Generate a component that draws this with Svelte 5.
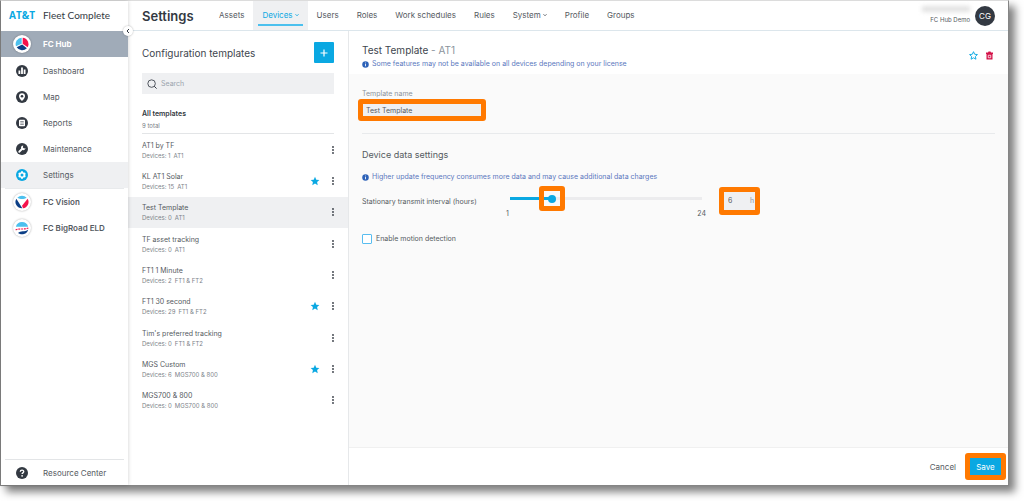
<script>
  const modules = [
    { label: 'Dashboard', icon: 'dashboard' },
    { label: 'Map', icon: 'map' },
    { label: 'Reports', icon: 'reports' },
    { label: 'Maintenance', icon: 'wrench' },
    { label: 'Settings', icon: 'gear', active: true }
  ];

  const tabs = [
    { label: 'Assets' },
    { label: 'Devices', menu: true, active: true },
    { label: 'Users' },
    { label: 'Roles' },
    { label: 'Work schedules' },
    { label: 'Rules' },
    { label: 'System', menu: true },
    { label: 'Profile' },
    { label: 'Groups' }
  ];

  const templates = [
    { name: 'AT1 by TF', devices: 1, type: 'AT1' },
    { name: 'KL AT1 Solar', devices: 15, type: 'AT1', starred: true },
    { name: 'Test Template', devices: 0, type: 'AT1', selected: true },
    { name: 'TF asset tracking', devices: 0, type: 'AT1' },
    { name: 'FT1 1 Minute', devices: 2, type: 'FT1 & FT2' },
    { name: 'FT1 30 second', devices: 29, type: 'FT1 & FT2', starred: true },
    { name: "Tim's preferred tracking", devices: 0, type: 'FT1 & FT2' },
    { name: 'MGS Custom', devices: 6, type: 'MGS700 & 800', starred: true },
    { name: 'MGS700 & 800', devices: 0, type: 'MGS700 & 800' }
  ];

  const min = 1;
  const max = 24;
  let hours = $state(6);
  let name = $state('Test Template');
  let motion = $state(false);
  let fraction = $derived((hours - min) / (max - min));
</script>

{#snippet starShape()}
  <path d="M12 1.8l3.1 6.9 7.4.8-5.5 5 1.5 7.4L12 18.200l-6.500 3.700L7 14.500l-5.500-5 7.400-.8z" />
{/snippet}

{#snippet info()}
  <svg class="info" viewBox="0 0 14 14" aria-hidden="true">
    <circle cx="7" cy="7" r="6.500" fill="#2d62b8" />
    <path d="M7 6v4.500M7 3.200v1.600" stroke="#fff" stroke-width="1.700" />
  </svg>
{/snippet}

{#snippet caret()}
  <svg class="caret" viewBox="0 0 8 8" aria-hidden="true">
    <path d="M1 2.500L4 5.500l3-3" fill="none" stroke="currentColor" stroke-width="1.800" />
  </svg>
{/snippet}

{#snippet icon(kind)}
  <svg class="glyph" viewBox="0 0 24 24" aria-hidden="true">
    <circle cx="12" cy="12" r="12" fill={kind === 'gear' ? '#0aa8e2' : '#333942'} />
    {#if kind === 'dashboard'}
      <path d="M5 11h3.600v7H5zM10.200 5h3.600v13h-3.600zM15.400 9H19v9h-3.600z" fill="#fff" />
    {:else if kind === 'map'}
      <path d="M12 4.500a6 6 0 0 0-6 6c0 4 6 9.500 6 9.500s6-5.500 6-9.500a6 6 0 0 0-6-6z" fill="#fff" />
      <circle cx="12" cy="10.500" r="2.600" fill="#333942" />
    {:else if kind === 'reports'}
      <rect x="6" y="5.500" width="12" height="13" rx="1.500" fill="#fff" />
      <path d="M8.500 9h7M8.500 12h7M8.500 15h7" stroke="#6b7078" stroke-width="1.500" />
    {:else if kind === 'wrench'}
      <path d="M6.500 17.500l6-6" stroke="#fff" stroke-width="3.600" stroke-linecap="round" />
      <path d="M14.500 5.200a4.600 4.600 0 1 0 4.600 5l-2.800.9-2.600-2.200z" fill="#fff" />
    {:else if kind === 'gear'}
      <path d="M10.300 4.500h3.400l.6 2 1.600.9 2-.5 1.700 2.900-1.400 1.500v1.400l1.400 1.500-1.700 2.900-2-.5-1.600.9-.6 2h-3.400l-.6-2-1.600-.9-2 .5-1.700-2.900 1.400-1.500v-1.400L4.400 9.800l1.700-2.900 2 .5 1.600-.9z" fill="#fff" />
      <circle cx="12" cy="12" r="3" fill="#0aa8e2" />
    {:else}
      <path d="M8.600 9.600c0-4.400 6.900-4.400 6.900-.4 0 2.600-3.300 2.500-3.300 5" fill="none" stroke="#fff" stroke-width="2.600" />
      <circle cx="12.200" cy="17.600" r="1.700" fill="#fff" />
    {/if}
  </svg>
{/snippet}

<div class="page">
  <div class="window">
    <aside class="sidebar">
      <div class="brand"><strong>AT&amp;T</strong><span>Fleet Complete</span></div>
      <button class="collapse" aria-label="Collapse menu">
        <svg viewBox="0 0 8 8" aria-hidden="true"><path d="M5 2L3 4l2 2" fill="none" stroke="#333942" /></svg>
      </button>
      <nav class="modules">
        <a class="module hub" href="#hub">
          <span class="badge">
            <svg viewBox="0 0 24 24" aria-hidden="true">
              <path d="M11.500 2.500v9L3 15.500A9.800 9.800 0 0 1 11.500 2.500z" fill="#4cc0ee" />
              <path d="M13 2.500a9.800 9.800 0 0 1 7.500 14.500L13 11.500z" fill="#f5114b" />
              <path d="M4 17l8.300-4.200 7 5.500A9.800 9.800 0 0 1 4 17z" fill="#0c3f86" />
            </svg>
          </span>
          FC Hub
        </a>
        {#each modules as m}
          <a class="module" class:active={m.active} href="#{m.icon}">
            <span class="slot">{@render icon(m.icon)}</span>{m.label}
          </a>
        {/each}
        <hr />
        <a class="module product" href="#vision">
          <span class="badge">
            <svg viewBox="0 0 24 24" aria-hidden="true">
              <path d="M5 5.500a9.700 9.700 0 0 1 14 0c-4 2.500-10 2.500-14 0z" fill="#4cc0ee" />
              <path d="M3.500 7l9 14.500A9.700 9.700 0 0 1 3.500 7z" fill="#0c3f86" />
              <path d="M20.500 7a9.700 9.700 0 0 1-7 14.500l-1.500-4z" fill="#f5114b" />
            </svg>
          </span>
          FC Vision
        </a>
        <a class="module product" href="#bigroad">
          <span class="badge">
            <svg viewBox="0 0 24 24" aria-hidden="true">
              <path d="M2.800 10A9.600 9.600 0 0 1 21.200 10z" fill="#4cc0ee" />
              <path d="M2.500 15c5-3 12 0 19-3" fill="none" stroke="#f5114b" stroke-width="1.800" stroke-dasharray="3 1.200" />
              <path d="M6 19.500c4-4 10-1.500 15.300-5A9.700 9.700 0 0 1 6 19.500z" fill="#0c3f86" />
            </svg>
          </span>
          FC BigRoad ELD
        </a>
      </nav>
      <div class="resources">
        <a class="module" href="#help"><span class="slot">{@render icon('help')}</span>Resource Center</a>
      </div>
    </aside>

    <div class="main">
      <header class="topbar">
        <h1>Settings</h1>
        <nav class="tabs">
          {#each tabs as t}
            <a class="tab" class:current={t.active} href="#{t.label}">
              <span>{t.label}{#if t.menu}{@render caret()}{/if}</span>
            </a>
          {/each}
        </nav>
        <div class="account">
          <div class="who">
            <i class="redacted"></i>
            <span>FC Hub Demo</span>
          </div>
          <span class="avatar">CG</span>
        </div>
      </header>

      <div class="columns">
        <section class="list">
          <div class="list-head">
            <h2>Configuration templates</h2>
            <button class="add" aria-label="Add template">
              <svg viewBox="0 0 10 10" aria-hidden="true"><path d="M5 1.500v7M1.500 5h7" stroke="#fff" stroke-width="1.200" /></svg>
            </button>
          </div>
          <label class="search">
            <svg viewBox="0 0 12 12" aria-hidden="true">
              <circle cx="5.500" cy="5.500" r="4.500" fill="none" stroke="#333942" />
              <path d="M8.700 8.700L11.500 11.500" stroke="#333942" stroke-width="1.200" />
            </svg>
            <input type="search" placeholder="Search" aria-label="Search" />
          </label>
          <div class="summary">
            <strong>All templates</strong>
            <span>9 total</span>
          </div>
          <ul class="templates">
            {#each templates as t}
              <li class:selected={t.selected}>
                <div class="text">
                  <span class="name">{t.name}</span>
                  <span class="meta"><span>Devices: {t.devices}</span><span>{t.type}</span></span>
                </div>
                {#if t.starred}
                  <svg class="star" viewBox="0 0 24 24" fill="#0aa8e2" aria-hidden="true">{@render starShape()}</svg>
                {/if}
                <button class="more" aria-label="More actions">
                  <svg viewBox="0 0 4 10" fill="#333942" aria-hidden="true">
                    <circle cx="2" cy="2" r="0.900" /><circle cx="2" cy="5" r="0.900" /><circle cx="2" cy="8" r="0.900" />
                  </svg>
                </button>
              </li>
            {/each}
          </ul>
        </section>

        <section class="detail">
          <div class="detail-head">
            <div>
              <h2>Test Template <span>- AT1</span></h2>
              <p class="note">{@render info()}Some features may not be available on all devices depending on your license</p>
            </div>
            <div class="actions">
              <button aria-label="Favourite">
                <svg viewBox="0 0 24 24" fill="none" stroke="#0aa8e2" stroke-width="2.500" aria-hidden="true">{@render starShape()}</svg>
              </button>
              <button aria-label="Delete">
                <svg viewBox="0 0 18 18" aria-hidden="true">
                  <path d="M2 3h4l1-2h4l1 2h4v3H2zM3 6h12v11H3z" fill="#d4144a" />
                  <path d="M6.500 8.500h5v5h-5z" fill="none" stroke="#fff" stroke-width="1.500" />
                </svg>
              </button>
            </div>
          </div>

          <form class="body" onsubmit={(e) => e.preventDefault()}>
            <label class="field-label" for="template-name">Template name</label>
            <div class="callout name-callout">
              <input id="template-name" type="text" bind:value={name} />
            </div>
            <hr />
            <h3>Device data settings</h3>
            <p class="note">{@render info()}Higher update frequency consumes more data and may cause additional data charges</p>
            <div class="interval">
              <label for="interval">Stationary transmit interval (hours)</label>
              <div class="slider" style="--f: {fraction}">
                <input id="interval" type="range" {min} {max} bind:value={hours} />
                <i class="callout thumb-callout"></i>
                <div class="scale"><span>{min}</span><span>{max}</span></div>
              </div>
              <div class="callout hours-callout">
                <input type="text" aria-label="Hours" bind:value={hours} /><span>h</span>
              </div>
            </div>
            <label class="check"><input type="checkbox" bind:checked={motion} />Enable motion detection</label>
          </form>

          <footer>
            <button class="cancel">Cancel</button>
            <div class="callout"><button class="save">Save</button></div>
          </footer>
        </section>
      </div>
    </div>
  </div>
</div>

<style>
  :global(body) {
    background: #fff;
  }

  .page,
  .page :global(*) {
    box-sizing: border-box;
  }

  .page {
    display: flex;
    height: 100vh;
    padding: 0 15px 15px 0;
    font: 7px/10px Inter, 'Liberation Sans', sans-serif;
    color: #555a61;
  }

  h1, h2, h3, p, ul {
    margin: 0;
    padding: 0;
    font-weight: 400;
  }

  button, input {
    margin: 0;
    padding: 0;
    border: 0;
    background: none;
    font: inherit;
    color: inherit;
    outline: 0;
  }

  a {
    color: inherit;
    text-decoration: none;
  }

  hr {
    margin: 0;
    border: 0;
    border-top: 1px solid #e8eaec;
  }

  svg {
    display: block;
    flex: none;
  }

  .window {
    display: flex;
    flex: 1;
    min-width: 0;
    border: 1px solid #858585;
    border-top-color: #dcdcdc;
    background: #fff;
    box-shadow: 6px 6px 8px rgba(0, 0, 0, 0.5);
  }

  .sidebar {
    position: relative;
    z-index: 2;
    display: flex;
    flex-direction: column;
    width: 127px;
    flex: none;
    box-shadow: 0 0 4px rgba(0, 0, 0, 0.2);
    background: #fff;
  }

  .brand {
    display: flex;
    align-items: center;
    gap: 8px;
    height: 30px;
    padding: 0 0 2px 8px;
    font: 10px/14px Lato, sans-serif;
    color: #333942;
    white-space: nowrap;
  }

  .brand strong {
    font-family: 'Open Sans', sans-serif;
    color: #0aa8e2;
    font-weight: 700;
  }

  .collapse {
    position: absolute;
    top: 25px;
    right: -5px;
    width: 10px;
    height: 10px;
    padding: 1px;
    border-radius: 50%;
    background: #fff;
    box-shadow: 0 0 2px rgba(0, 0, 0, 0.3);
  }

  .modules hr {
    margin: 0 4px;
  }

  .module {
    display: flex;
    align-items: center;
    gap: 12px;
    height: 26px;
    padding-left: 12px;
    font-size: 8px;
    white-space: nowrap;
  }

  .module.hub {
    background: #a0abb8;
    color: #fff;
    font-weight: 700;
  }

  .module.hub + .module {
    margin-top: 1px;
  }

  .module.active {
    background: #eff0f2;
  }

  .module.product {
    font-weight: 600;
  }

  .badge, .slot {
    display: grid;
    place-items: center;
    width: 18px;
    height: 18px;
  }

  .badge {
    border-radius: 50%;
    background: #fff;
    box-shadow: 0 0 2px rgba(0, 0, 0, 0.35);
  }

  .badge svg {
    width: 16px;
    height: 16px;
  }

  .glyph {
    width: 12px;
    height: 12px;
  }

  .resources {
    margin: auto 4px 0;
    border-top: 1px solid #e3e5e7;
  }

  .resources .module {
    height: 25px;
    padding-left: 8px;
  }

  .main {
    display: flex;
    flex: 1;
    flex-direction: column;
    min-width: 0;
  }

  .topbar {
    display: flex;
    height: 30px;
    align-items: center;
    padding: 0 13px 0 14px;
    border-bottom: 1px solid #dce6ec;
    white-space: nowrap;
  }

  h1 {
    width: 68px;
    font-size: 13px;
    line-height: 18px;
    font-weight: 600;
    color: #333942;
  }

  .tabs {
    display: flex;
    align-self: stretch;
  }

  .tab {
    display: flex;
    padding: 0 5px;
    font-size: 8px;
  }

  .tab span {
    display: flex;
    align-items: center;
    gap: 2px;
    margin-bottom: 4px;
    padding: 4px 4px 0;
    border-bottom: 2px solid transparent;
  }

  .tab.current {
    background: #eff0f2;
    color: #0aa8e2;
  }

  .tab.current span {
    border-color: #4cc0ee;
  }

  .caret {
    width: 4px;
    height: 4px;
  }

  .account {
    display: flex;
    align-items: center;
    gap: 5px;
    margin-left: auto;
  }

  .who {
    display: flex;
    flex-direction: column;
    align-items: flex-end;
    gap: 3px;
    font-size: 6px;
  }

  .redacted {
    width: 48px;
    height: 6px;
    background: #e2e2e2;
    filter: blur(2px);
  }

  .avatar {
    width: 20px;
    height: 20px;
    border-radius: 50%;
    background: #333942;
    color: #fff;
    font-size: 8px;
    line-height: 20px;
    text-align: center;
  }

  .columns {
    display: flex;
    flex: 1;
    min-height: 0;
  }

  .list {
    width: 221px;
    flex: none;
    border-right: 1px solid #e6e8ea;
  }

  .list-head {
    display: flex;
    align-items: center;
    justify-content: space-between;
    padding: 11px 14px 10px;
  }

  h2 {
    font-size: 10px;
    line-height: 14px;
    color: #40464e;
  }

  .add {
    display: grid;
    place-items: center;
    width: 20px;
    height: 21px;
    border-radius: 1px;
    background: #0aa8e2;
  }

  .add svg {
    width: 10px;
    height: 10px;
  }

  .search {
    display: flex;
    align-items: center;
    gap: 4px;
    height: 21px;
    margin: 0 14px;
    padding: 0 5px;
    background: #eff0f2;
  }

  .search svg {
    width: 10px;
    height: 10px;
  }

  .search input {
    flex: 1;
    min-width: 0;
  }

  .search input::placeholder {
    color: #9aa3ad;
    opacity: 1;
  }

  .summary {
    display: flex;
    flex-direction: column;
    gap: 2px;
    margin: 0 14px;
    padding: 15px 0 2px;
    border-bottom: 1px solid #e3e5e7;
  }

  .summary strong {
    font-weight: 600;
    color: #333942;
  }

  .summary span {
    font-size: 6px;
    color: #777d85;
  }

  .templates {
    display: grid;
    grid-auto-rows: 1fr;
    min-height: 282px;
    list-style: none;
  }

  .templates li {
    display: flex;
    align-items: center;
    gap: 11px;
    padding: 0 13px 0 14px;
  }

  .selected {
    background: #eff0f2;
  }

  .text {
    display: flex;
    flex: 1;
    flex-direction: column;
    padding-top: 2px;
  }

  .meta {
    display: flex;
    gap: 3px;
    font-size: 6px;
    color: #7d838a;
  }

  .star {
    width: 10px;
    height: 10px;
  }

  .more svg {
    width: 4px;
    height: 10px;
  }

  .detail {
    display: flex;
    flex: 1;
    flex-direction: column;
    min-width: 0;
    background: #fafafa;
  }

  .detail-head {
    display: flex;
    justify-content: space-between;
    min-height: 43px;
    padding: 12px 14px 0 13px;
    background: #fff;
  }

  .detail-head h2 {
    margin-bottom: 2px;
  }

  .detail-head h2 span {
    color: #8b939c;
  }

  .note {
    display: flex;
    align-items: center;
    gap: 3px;
    color: #5a78be;
  }

  .info {
    width: 7px;
    height: 7px;
  }

  .actions {
    display: flex;
    align-items: center;
    gap: 7px;
    height: 24px;
  }

  .actions svg {
    width: 9px;
    height: 9px;
  }

  .body {
    flex: 1;
    padding: 15px 13px 0;
  }

  .field-label {
    display: block;
    color: #8b939c;
  }

  .callout {
    border: 5px solid #ff7900;
    border-radius: 3px;
    background: #eff0f2;
  }

  .name-callout {
    width: 128px;
    margin: 0 0 12px -4px;
  }

  .name-callout input {
    display: block;
    width: 100%;
    height: 12px;
    padding: 0 3px;
  }

  h3 {
    margin: 14px 0 10px;
    font-size: 9px;
    line-height: 14px;
  }

  .interval {
    display: flex;
    align-items: flex-start;
  }

  .interval > label {
    width: 144px;
    margin-top: 15px;
    flex: none;
  }

  .slider {
    position: relative;
    width: 200px;
    margin-right: 13px;
    padding-top: 12px;
  }

  .slider input {
    display: block;
    width: 100%;
    height: 9px;
    appearance: none;
    background:
      linear-gradient(90deg, #0aa8e2 calc(var(--f) * 100%), #ececee calc(var(--f) * 100%))
      center / calc(100% - 8px) 3px no-repeat;
  }

  .slider input::-webkit-slider-thumb {
    appearance: none;
    width: 8px;
    height: 8px;
    border-radius: 50%;
    background: #0aa8e2;
  }

  .thumb-callout {
    position: absolute;
    top: 4px;
    left: calc(4px + (100% - 8px) * var(--f));
    width: 26px;
    height: 25px;
    margin-left: -13px;
    background: none;
    pointer-events: none;
  }

  .scale {
    display: flex;
    justify-content: space-between;
    padding-top: 6px;
  }

  .hours-callout {
    display: flex;
    align-items: center;
    width: 41px;
    height: 28px;
    margin-top: 5px;
    padding-left: 4px;
    overflow: hidden;
  }

  .hours-callout input {
    width: 22px;
    flex: none;
  }

  .hours-callout span {
    color: #8b939c;
  }

  .check {
    display: inline-flex;
    align-items: center;
    gap: 4px;
    margin-top: 15px;
  }

  .check input {
    appearance: none;
    width: 10px;
    height: 10px;
    border: 1px solid #58bdf0;
    border-radius: 1px;
    background: #fff;
  }

  .check input:checked {
    background: #0aa8e2;
  }

  footer {
    display: flex;
    align-items: center;
    justify-content: flex-end;
    gap: 9px;
    height: 38px;
    padding-right: 2px;
    border-top: 1px solid #f0f0f0;
    background: #fff;
    font-size: 8px;
  }

  .save {
    display: block;
    width: 31px;
    height: 17px;
    background: #0aa8e2;
    color: #fff;
  }
</style>
